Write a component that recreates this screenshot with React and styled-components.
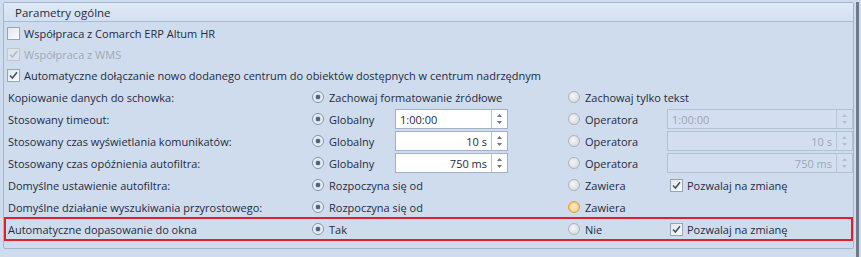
import React from "react";
import styled, { createGlobalStyle, css } from "styled-components";

const GlobalStyle = createGlobalStyle`
  html, body { margin: 0; padding: 0; }
  body {
    background: #cfdcee;
    font-family: "Open Sans", "Noto Sans", "DejaVu Sans", sans-serif;
    font-size: 11px;
    color: #1f2b42;
  }
`;

const Page = styled.div`
  width: 861px;
  height: 257px;
  display: flex;
  background: #cfdcee;
  box-sizing: border-box;
  padding: 2px 0 0 3px;
  overflow: hidden;
`;

const Panel = styled.div`
  width: 851px;
  height: 247px;
  box-sizing: border-box;
  border: 1px solid #a3b5cf;
  border-radius: 2px;
  display: flex;
  flex-direction: column;
`;

const Edge = styled.div`
  width: 3px;
  margin-left: 2px;
  height: 100%;
  background: #6f7a89;
`;

const Header = styled.div`
  height: 19px;
  flex: none;
  box-sizing: border-box;
  padding-left: 11px;
  display: flex;
  align-items: center;
  background: linear-gradient(#dfe9f7, #d3e0f2);
  border-bottom: 1px solid #a9bbd3;
  font-size: 11.5px;
`;

const Body = styled.div`
  display: flex;
  flex-direction: column;
  padding-top: 1px;
`;

const CheckRow = styled.label`
  height: 21px;
  display: flex;
  align-items: center;
  gap: 4px;
  padding-left: 3px;
  color: ${(p) => (p.$disabled ? "#a2a8b2" : "inherit")};
`;

const Box = styled.span`
  width: 13px;
  height: 13px;
  box-sizing: border-box;
  border: 1px solid ${(p) => (p.$disabled ? "#c0c7d1" : "#9ba4b1")};
  background: ${(p) =>
    p.$disabled ? "#dde3ea" : "linear-gradient(135deg, #e2e6eb, #fbfcfd)"};
  display: inline-flex;
  align-items: center;
  justify-content: center;
  flex: none;
`;

const Check = ({ on, disabled }) => (
  <Box $disabled={disabled}>
    {on && (
      <svg width="9" height="9" viewBox="0 0 9 9">
        <path
          d="M1 4.5 L3.4 7 L8 1.2"
          fill="none"
          stroke={disabled ? "#b3bac4" : "#3f5172"}
          strokeWidth="1.5"
        />
      </svg>
    )}
  </Box>
);

const FormRow = styled.div`
  position: relative;
  height: 22px;
  display: grid;
  grid-template-columns: 304px 84px 172px 99px 185px;
  align-items: center;
  padding-left: 4px;
  ${(p) =>
    p.$highlight &&
    css`
      &::after {
        content: "";
        position: absolute;
        left: 0;
        top: -1px;
        width: 845px;
        height: 20px;
        border: 2px solid #e0202b;
        pointer-events: none;
      }
    `}
`;

const Label = styled.span`
  white-space: nowrap;
`;

const RadioOpt = styled.span`
  display: flex;
  align-items: center;
  gap: 5px;
  white-space: nowrap;
  grid-column: ${(p) => p.$span || "auto"};
`;

const RadioCircle = styled.span`
  width: 12px;
  height: 12px;
  border-radius: 50%;
  box-sizing: border-box;
  flex: none;
  display: inline-flex;
  align-items: center;
  justify-content: center;
  ${(p) =>
    p.$state === "on"
      ? css`
          border: 1px solid #8593a8;
          background: radial-gradient(circle, #4b6385 0 2px, #c9d3e0 2.5px, #eef2f6 4px);
        `
      : p.$state === "hot"
      ? css`
          border: 1px solid #e8a03c;
          background: radial-gradient(circle, #fde6b8 0 2.5px, #f8c375 5px);
        `
      : css`
          border: 1px solid #adb3bb;
          background: radial-gradient(circle at 40% 40%, #f4f5f6, #d0d4d9);
        `}
`;

const Radio = ({ state = "off", children, span }) => (
  <RadioOpt $span={span}>
    <RadioCircle $state={state} />
    {children}
  </RadioOpt>
);

const Spin = styled.div`
  display: flex;
  height: 20px;
  width: ${(p) => p.$w}px;
  box-sizing: border-box;
  border: 1px solid ${(p) => (p.$disabled ? "#b3c1d4" : "#a1b1c7")};
  background: ${(p) => (p.$disabled ? "#d3dff0" : "#ffffff")};
  margin-left: ${(p) => p.$ml || 0}px;
`;

const SpinText = styled.div`
  flex: 1;
  display: flex;
  align-items: center;
  justify-content: ${(p) => (p.$right ? "flex-end" : "flex-start")};
  padding: 0 4px;
  color: ${(p) => (p.$disabled ? "#9ea6b2" : "#1f2b42")};
  border-right: 1px solid ${(p) => (p.$disabled ? "#b9c6d8" : "#b6c3d4")};
`;

const SpinBtns = styled.div`
  width: 15px;
  display: flex;
  flex-direction: column;
  align-items: center;
  justify-content: center;
  gap: 4px;
`;

const Arrow = ({ up, disabled }) => (
  <svg width="5" height="3" viewBox="0 0 5 3">
    <path
      d={up ? "M0 3 L2.5 0 L5 3 Z" : "M0 0 L2.5 3 L5 0 Z"}
      fill={disabled ? "#b6bfcc" : "#6c7687"}
    />
  </svg>
);

const SpinBox = ({ value, right, disabled, w, ml }) => (
  <Spin $w={w} $disabled={disabled} $ml={ml}>
    <SpinText $right={right} $disabled={disabled}>
      {value}
    </SpinText>
    <SpinBtns>
      <Arrow up disabled={disabled} />
      <Arrow disabled={disabled} />
    </SpinBtns>
  </Spin>
);

const CheckOpt = styled.span`
  display: flex;
  align-items: center;
  gap: 4px;
  padding-left: 3px;
  white-space: nowrap;
`;

const spinRows = [
  { label: "Stosowany timeout:", value: "1:00:00", right: false },
  { label: "Stosowany czas wyświetlania komunikatów:", value: "10 s", right: true },
  { label: "Stosowany czas opóźnienia autofiltra:", value: "750 ms", right: true },
];

export default function App() {
  return (
    <>
      <GlobalStyle />
      <Page>
        <Panel>
          <Header>Parametry ogólne</Header>
          <Body>
            <CheckRow>
              <Check />
              Współpraca z Comarch ERP Altum HR
            </CheckRow>
            <CheckRow $disabled>
              <Check on disabled />
              Współpraca z WMS
            </CheckRow>
            <CheckRow>
              <Check on />
              Automatyczne dołączanie nowo dodanego centrum do obiektów dostępnych w centrum nadrzędnym
            </CheckRow>
            <FormRow>
              <Label>Kopiowanie danych do schowka:</Label>
              <Radio state="on" span="2 / span 2">
                Zachowaj formatowanie źródłowe
              </Radio>
              <Radio span="4 / span 2">Zachowaj tylko tekst</Radio>
            </FormRow>
            {spinRows.map((r) => (
              <FormRow key={r.label}>
                <Label>{r.label}</Label>
                <Radio state="on">Globalny</Radio>
                <SpinBox value={r.value} right={r.right} w={113} ml={-1} />
                <Radio>Operatora</Radio>
                <SpinBox value={r.value} right={r.right} w={186} disabled />
              </FormRow>
            ))}
            <FormRow>
              <Label>Domyślne ustawienie autofiltra:</Label>
              <Radio state="on" span="2 / span 2">
                Rozpoczyna się od
              </Radio>
              <Radio>Zawiera</Radio>
              <CheckOpt>
                <Check on />
                Pozwalaj na zmianę
              </CheckOpt>
            </FormRow>
            <FormRow>
              <Label>Domyślne działanie wyszukiwania przyrostowego:</Label>
              <Radio state="on" span="2 / span 2">
                Rozpoczyna się od
              </Radio>
              <Radio state="hot">Zawiera</Radio>
            </FormRow>
            <FormRow $highlight>
              <Label>Automatyczne dopasowanie do okna</Label>
              <Radio state="on" span="2 / span 2">
                Tak
              </Radio>
              <Radio>Nie</Radio>
              <CheckOpt>
                <Check on />
                Pozwalaj na zmianę
              </CheckOpt>
            </FormRow>
          </Body>
        </Panel>
        <Edge />
      </Page>
    </>
  );
}
